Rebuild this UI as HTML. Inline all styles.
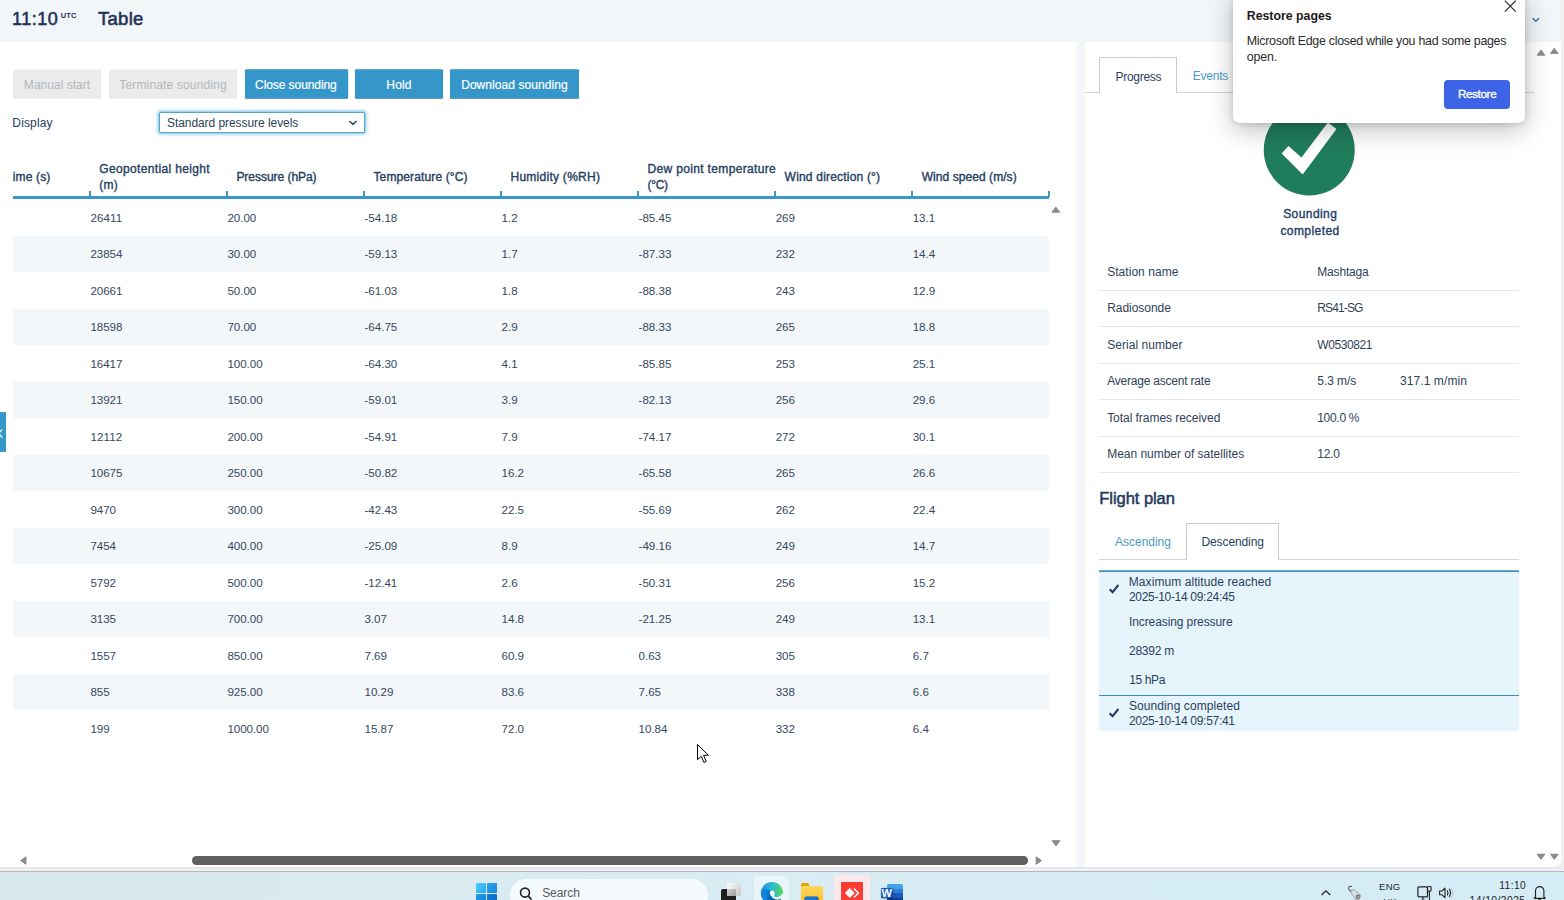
<!DOCTYPE html>
<html lang="en"><head><meta charset="utf-8"><title>Table</title><style>html,body{margin:0;padding:0}body{width:1564px;height:900px;position:relative;overflow:hidden;background:#fff;font-family:"Liberation Sans", sans-serif}
#r>div,#r>span,#r>svg{position:absolute;display:block}#r>span{white-space:pre}#r{position:absolute;left:0;top:0;width:1564px;height:900px;overflow:hidden}</style></head><body><div id="r">
<div style="left:0px;top:0px;width:1564px;height:42px;background:#f2f6f9;"></div>
<div style="left:1078px;top:42px;width:7px;height:829px;background:#f2f6f9;"></div>
<div style="left:1075px;top:42px;width:3px;height:826px;background:linear-gradient(90deg,#ffffff,#f4f5f6);"></div>
<div style="left:0px;top:867px;width:1564px;height:2.4px;background:#e7e7e7;"></div>
<div style="left:0px;top:869.4px;width:1564px;height:1.6px;background:#f1f1f1;"></div>
<div style="left:1561px;top:0px;width:3px;height:871px;background:#f1f1f1;"></div>
<div style="left:1555px;top:861px;width:6px;height:6px;background:radial-gradient(circle at 0 0,#ffffff 5.2px,#ececec 6px);"></div>
<span style="left:11.94px;top:9.66px;font-size:18px;line-height:18px;font-weight:400;color:#1f3358;letter-spacing:0.52px;-webkit-text-stroke:0.56px #1f3358;">11:10</span>
<span style="left:60.67px;top:11.77px;font-size:7.6px;line-height:7.6px;font-weight:700;color:#1f3358;letter-spacing:0.085px;">UTC</span>
<span style="left:97.91px;top:9.74px;font-size:18.5px;line-height:18.5px;font-weight:400;color:#1f3358;letter-spacing:0.311px;-webkit-text-stroke:0.57px #1f3358;">Table</span>
<svg style="left:1530px;top:15px" width="12" height="10" viewBox="0 0 12 10"><path d="M2.6 3.2 L5.8 6.2 L9 3.2" fill="none" stroke="#3a6ea5" stroke-width="1.4"/></svg>
<svg style="left:12.0px;top:68px" width="90.0" height="33" viewBox="0 0 90.0 33"><rect x="1" y="1.5" width="88.0" height="29.3" rx="1" fill="#ebebeb"/></svg>
<span style="left:23.86px;top:78.54px;font-size:12px;line-height:12px;font-weight:400;color:#b3b8bd;letter-spacing:0.021px;">Manual start</span>
<svg style="left:108.0px;top:68px" width="130.2" height="33" viewBox="0 0 130.2 33"><rect x="1" y="1.5" width="128.2" height="29.3" rx="1" fill="#ebebeb"/></svg>
<span style="left:119.36px;top:78.54px;font-size:12px;line-height:12px;font-weight:400;color:#b3b8bd;letter-spacing:0.147px;">Terminate sounding</span>
<svg style="left:243.7px;top:68px" width="105.1" height="33" viewBox="0 0 105.1 33"><rect x="1" y="1.5" width="103.1" height="29.3" rx="1" fill="#2b7aa9"/><rect x="1" y="1.5" width="103.1" height="28.4" rx="1" fill="#3496c9"/></svg>
<span style="left:255.06px;top:78.54px;font-size:12px;line-height:12px;font-weight:400;color:#ffffff;letter-spacing:-0.075px;-webkit-text-stroke:0.18px #fff;">Close sounding</span>
<svg style="left:354.0px;top:68px" width="89.9" height="33" viewBox="0 0 89.9 33"><rect x="1" y="1.5" width="87.9" height="29.3" rx="1" fill="#2b7aa9"/><rect x="1" y="1.5" width="87.9" height="28.4" rx="1" fill="#3496c9"/></svg>
<span style="left:386.36px;top:78.54px;font-size:12px;line-height:12px;font-weight:400;color:#ffffff;letter-spacing:0.123px;-webkit-text-stroke:0.18px #fff;">Hold</span>
<svg style="left:449.0px;top:68px" width="131.0" height="33" viewBox="0 0 131.0 33"><rect x="1" y="1.5" width="129.0" height="29.3" rx="1" fill="#2b7aa9"/><rect x="1" y="1.5" width="129.0" height="28.4" rx="1" fill="#3496c9"/></svg>
<span style="left:461.16px;top:78.54px;font-size:12px;line-height:12px;font-weight:400;color:#ffffff;letter-spacing:0.062px;-webkit-text-stroke:0.18px #fff;">Download sounding</span>
<span style="left:12.36px;top:117.04px;font-size:12px;line-height:12px;font-weight:400;color:#26405f;letter-spacing:0.132px;">Display</span>
<div style="left:159.3px;top:111.7px;width:205.3px;height:21.4px;background:#ffffff;box-sizing:border-box;border:1px solid #5aa5c6;border-radius:2px;box-shadow:0 0 3.5px 0.5px rgba(80,175,220,.85)"></div>
<span style="left:166.96px;top:117.04px;font-size:12px;line-height:12px;font-weight:400;color:#2f4257;letter-spacing:-0.061px;">Standard pressure levels</span>
<svg style="left:347px;top:118px" width="12" height="10" viewBox="0 0 12 10"><path d="M2.4 3 L6 6.4 L9.6 3" fill="none" stroke="#33475d" stroke-width="1.5"/></svg>
<div style="left:13px;top:196.2px;width:1036px;height:3px;background:#3a97c8;"></div>
<div style="left:88.9px;top:190.8px;width:1.7px;height:6px;background:#3a97c8;"></div>
<div style="left:225.95000000000002px;top:190.8px;width:1.7px;height:6px;background:#3a97c8;"></div>
<div style="left:363.0px;top:190.8px;width:1.7px;height:6px;background:#3a97c8;"></div>
<div style="left:500.05px;top:190.8px;width:1.7px;height:6px;background:#3a97c8;"></div>
<div style="left:637.1px;top:190.8px;width:1.7px;height:6px;background:#3a97c8;"></div>
<div style="left:774.15px;top:190.8px;width:1.7px;height:6px;background:#3a97c8;"></div>
<div style="left:911.2px;top:190.8px;width:1.7px;height:6px;background:#3a97c8;"></div>
<div style="left:1048.2500000000002px;top:190.8px;width:1.7px;height:6px;background:#3a97c8;"></div>
<span style="left:12.66px;top:170.94px;font-size:12px;line-height:12px;font-weight:400;color:#26405f;letter-spacing:0.173px;-webkit-text-stroke:0.37px #26405f;">ime (s)</span>
<span style="left:99.36px;top:162.64px;font-size:12px;line-height:12px;font-weight:400;color:#26405f;letter-spacing:0.341px;-webkit-text-stroke:0.37px #26405f;">Geopotential height</span>
<span style="left:99.36px;top:178.74px;font-size:12px;line-height:12px;font-weight:400;color:#26405f;letter-spacing:0.26px;-webkit-text-stroke:0.37px #26405f;">(m)</span>
<span style="left:236.41px;top:170.94px;font-size:12px;line-height:12px;font-weight:400;color:#26405f;letter-spacing:-0.037px;-webkit-text-stroke:0.37px #26405f;">Pressure (hPa)</span>
<span style="left:373.46px;top:170.94px;font-size:12px;line-height:12px;font-weight:400;color:#26405f;letter-spacing:0.126px;-webkit-text-stroke:0.37px #26405f;">Temperature (°C)</span>
<span style="left:510.51px;top:170.94px;font-size:12px;line-height:12px;font-weight:400;color:#26405f;letter-spacing:0.262px;-webkit-text-stroke:0.37px #26405f;">Humidity (%RH)</span>
<span style="left:647.56px;top:162.64px;font-size:12px;line-height:12px;font-weight:400;color:#26405f;letter-spacing:0.337px;-webkit-text-stroke:0.37px #26405f;">Dew point temperature</span>
<span style="left:647.56px;top:178.74px;font-size:12px;line-height:12px;font-weight:400;color:#26405f;letter-spacing:-0.297px;-webkit-text-stroke:0.37px #26405f;">(°C)</span>
<span style="left:784.61px;top:170.94px;font-size:12px;line-height:12px;font-weight:400;color:#26405f;letter-spacing:0.196px;-webkit-text-stroke:0.37px #26405f;">Wind direction (°)</span>
<span style="left:921.66px;top:170.94px;font-size:12px;line-height:12px;font-weight:400;color:#26405f;letter-spacing:0.066px;-webkit-text-stroke:0.37px #26405f;">Wind speed (m/s)</span>
<span style="left:90.39px;top:211.98px;font-size:11.6px;line-height:11.6px;font-weight:400;color:#35495f;letter-spacing:0.113px;">26411</span>
<span style="left:227.44px;top:211.98px;font-size:11.6px;line-height:11.6px;font-weight:400;color:#35495f;letter-spacing:-0.042px;">20.00</span>
<span style="left:364.49px;top:211.98px;font-size:11.6px;line-height:11.6px;font-weight:400;color:#35495f;letter-spacing:-0.02px;">-54.18</span>
<span style="left:501.54px;top:211.98px;font-size:11.6px;line-height:11.6px;font-weight:400;color:#35495f;letter-spacing:0.01px;">1.2</span>
<span style="left:638.59px;top:211.98px;font-size:11.6px;line-height:11.6px;font-weight:400;color:#35495f;letter-spacing:-0.02px;">-85.45</span>
<span style="left:775.64px;top:211.98px;font-size:11.6px;line-height:11.6px;font-weight:400;color:#35495f;letter-spacing:-0.012px;">269</span>
<span style="left:912.69px;top:211.98px;font-size:11.6px;line-height:11.6px;font-weight:400;color:#35495f;letter-spacing:-0.026px;">13.1</span>
<div style="left:13px;top:235.5px;width:1036px;height:36.5px;background:#f3f7fa;"></div>
<span style="left:90.39px;top:248.48px;font-size:11.6px;line-height:11.6px;font-weight:400;color:#35495f;letter-spacing:-0.058px;">23854</span>
<span style="left:227.44px;top:248.48px;font-size:11.6px;line-height:11.6px;font-weight:400;color:#35495f;letter-spacing:-0.042px;">30.00</span>
<span style="left:364.49px;top:248.48px;font-size:11.6px;line-height:11.6px;font-weight:400;color:#35495f;letter-spacing:-0.02px;">-59.13</span>
<span style="left:501.54px;top:248.48px;font-size:11.6px;line-height:11.6px;font-weight:400;color:#35495f;letter-spacing:0.01px;">1.7</span>
<span style="left:638.59px;top:248.48px;font-size:11.6px;line-height:11.6px;font-weight:400;color:#35495f;letter-spacing:-0.02px;">-87.33</span>
<span style="left:775.64px;top:248.48px;font-size:11.6px;line-height:11.6px;font-weight:400;color:#35495f;letter-spacing:-0.012px;">232</span>
<span style="left:912.69px;top:248.48px;font-size:11.6px;line-height:11.6px;font-weight:400;color:#35495f;letter-spacing:-0.026px;">14.4</span>
<span style="left:90.39px;top:284.98px;font-size:11.6px;line-height:11.6px;font-weight:400;color:#35495f;letter-spacing:-0.058px;">20661</span>
<span style="left:227.44px;top:284.98px;font-size:11.6px;line-height:11.6px;font-weight:400;color:#35495f;letter-spacing:-0.042px;">50.00</span>
<span style="left:364.49px;top:284.98px;font-size:11.6px;line-height:11.6px;font-weight:400;color:#35495f;letter-spacing:-0.02px;">-61.03</span>
<span style="left:501.54px;top:284.98px;font-size:11.6px;line-height:11.6px;font-weight:400;color:#35495f;letter-spacing:0.01px;">1.8</span>
<span style="left:638.59px;top:284.98px;font-size:11.6px;line-height:11.6px;font-weight:400;color:#35495f;letter-spacing:-0.02px;">-88.38</span>
<span style="left:775.64px;top:284.98px;font-size:11.6px;line-height:11.6px;font-weight:400;color:#35495f;letter-spacing:-0.012px;">243</span>
<span style="left:912.69px;top:284.98px;font-size:11.6px;line-height:11.6px;font-weight:400;color:#35495f;letter-spacing:-0.026px;">12.9</span>
<div style="left:13px;top:308.5px;width:1036px;height:36.5px;background:#f3f7fa;"></div>
<span style="left:90.39px;top:321.48px;font-size:11.6px;line-height:11.6px;font-weight:400;color:#35495f;letter-spacing:-0.058px;">18598</span>
<span style="left:227.44px;top:321.48px;font-size:11.6px;line-height:11.6px;font-weight:400;color:#35495f;letter-spacing:-0.042px;">70.00</span>
<span style="left:364.49px;top:321.48px;font-size:11.6px;line-height:11.6px;font-weight:400;color:#35495f;letter-spacing:-0.02px;">-64.75</span>
<span style="left:501.54px;top:321.48px;font-size:11.6px;line-height:11.6px;font-weight:400;color:#35495f;letter-spacing:0.01px;">2.9</span>
<span style="left:638.59px;top:321.48px;font-size:11.6px;line-height:11.6px;font-weight:400;color:#35495f;letter-spacing:-0.02px;">-88.33</span>
<span style="left:775.64px;top:321.48px;font-size:11.6px;line-height:11.6px;font-weight:400;color:#35495f;letter-spacing:-0.012px;">265</span>
<span style="left:912.69px;top:321.48px;font-size:11.6px;line-height:11.6px;font-weight:400;color:#35495f;letter-spacing:-0.026px;">18.8</span>
<span style="left:90.39px;top:357.98px;font-size:11.6px;line-height:11.6px;font-weight:400;color:#35495f;letter-spacing:-0.058px;">16417</span>
<span style="left:227.44px;top:357.98px;font-size:11.6px;line-height:11.6px;font-weight:400;color:#35495f;letter-spacing:-0.057px;">100.00</span>
<span style="left:364.49px;top:357.98px;font-size:11.6px;line-height:11.6px;font-weight:400;color:#35495f;letter-spacing:-0.02px;">-64.30</span>
<span style="left:501.54px;top:357.98px;font-size:11.6px;line-height:11.6px;font-weight:400;color:#35495f;letter-spacing:0.01px;">4.1</span>
<span style="left:638.59px;top:357.98px;font-size:11.6px;line-height:11.6px;font-weight:400;color:#35495f;letter-spacing:-0.02px;">-85.85</span>
<span style="left:775.64px;top:357.98px;font-size:11.6px;line-height:11.6px;font-weight:400;color:#35495f;letter-spacing:-0.012px;">253</span>
<span style="left:912.69px;top:357.98px;font-size:11.6px;line-height:11.6px;font-weight:400;color:#35495f;letter-spacing:-0.026px;">25.1</span>
<div style="left:13px;top:381.5px;width:1036px;height:36.5px;background:#f3f7fa;"></div>
<span style="left:90.39px;top:394.48px;font-size:11.6px;line-height:11.6px;font-weight:400;color:#35495f;letter-spacing:-0.058px;">13921</span>
<span style="left:227.44px;top:394.48px;font-size:11.6px;line-height:11.6px;font-weight:400;color:#35495f;letter-spacing:-0.057px;">150.00</span>
<span style="left:364.49px;top:394.48px;font-size:11.6px;line-height:11.6px;font-weight:400;color:#35495f;letter-spacing:-0.02px;">-59.01</span>
<span style="left:501.54px;top:394.48px;font-size:11.6px;line-height:11.6px;font-weight:400;color:#35495f;letter-spacing:0.01px;">3.9</span>
<span style="left:638.59px;top:394.48px;font-size:11.6px;line-height:11.6px;font-weight:400;color:#35495f;letter-spacing:-0.02px;">-82.13</span>
<span style="left:775.64px;top:394.48px;font-size:11.6px;line-height:11.6px;font-weight:400;color:#35495f;letter-spacing:-0.012px;">256</span>
<span style="left:912.69px;top:394.48px;font-size:11.6px;line-height:11.6px;font-weight:400;color:#35495f;letter-spacing:-0.026px;">29.6</span>
<span style="left:90.39px;top:430.98px;font-size:11.6px;line-height:11.6px;font-weight:400;color:#35495f;letter-spacing:0.113px;">12112</span>
<span style="left:227.44px;top:430.98px;font-size:11.6px;line-height:11.6px;font-weight:400;color:#35495f;letter-spacing:-0.057px;">200.00</span>
<span style="left:364.49px;top:430.98px;font-size:11.6px;line-height:11.6px;font-weight:400;color:#35495f;letter-spacing:-0.02px;">-54.91</span>
<span style="left:501.54px;top:430.98px;font-size:11.6px;line-height:11.6px;font-weight:400;color:#35495f;letter-spacing:0.01px;">7.9</span>
<span style="left:638.59px;top:430.98px;font-size:11.6px;line-height:11.6px;font-weight:400;color:#35495f;letter-spacing:-0.02px;">-74.17</span>
<span style="left:775.64px;top:430.98px;font-size:11.6px;line-height:11.6px;font-weight:400;color:#35495f;letter-spacing:-0.012px;">272</span>
<span style="left:912.69px;top:430.98px;font-size:11.6px;line-height:11.6px;font-weight:400;color:#35495f;letter-spacing:-0.026px;">30.1</span>
<div style="left:13px;top:454.5px;width:1036px;height:36.5px;background:#f3f7fa;"></div>
<span style="left:90.39px;top:467.48px;font-size:11.6px;line-height:11.6px;font-weight:400;color:#35495f;letter-spacing:-0.058px;">10675</span>
<span style="left:227.44px;top:467.48px;font-size:11.6px;line-height:11.6px;font-weight:400;color:#35495f;letter-spacing:-0.057px;">250.00</span>
<span style="left:364.49px;top:467.48px;font-size:11.6px;line-height:11.6px;font-weight:400;color:#35495f;letter-spacing:-0.02px;">-50.82</span>
<span style="left:501.54px;top:467.48px;font-size:11.6px;line-height:11.6px;font-weight:400;color:#35495f;letter-spacing:-0.026px;">16.2</span>
<span style="left:638.59px;top:467.48px;font-size:11.6px;line-height:11.6px;font-weight:400;color:#35495f;letter-spacing:-0.02px;">-65.58</span>
<span style="left:775.64px;top:467.48px;font-size:11.6px;line-height:11.6px;font-weight:400;color:#35495f;letter-spacing:-0.012px;">265</span>
<span style="left:912.69px;top:467.48px;font-size:11.6px;line-height:11.6px;font-weight:400;color:#35495f;letter-spacing:-0.026px;">26.6</span>
<span style="left:90.39px;top:503.98px;font-size:11.6px;line-height:11.6px;font-weight:400;color:#35495f;letter-spacing:-0.039px;">9470</span>
<span style="left:227.44px;top:503.98px;font-size:11.6px;line-height:11.6px;font-weight:400;color:#35495f;letter-spacing:-0.057px;">300.00</span>
<span style="left:364.49px;top:503.98px;font-size:11.6px;line-height:11.6px;font-weight:400;color:#35495f;letter-spacing:-0.02px;">-42.43</span>
<span style="left:501.54px;top:503.98px;font-size:11.6px;line-height:11.6px;font-weight:400;color:#35495f;letter-spacing:-0.026px;">22.5</span>
<span style="left:638.59px;top:503.98px;font-size:11.6px;line-height:11.6px;font-weight:400;color:#35495f;letter-spacing:-0.02px;">-55.69</span>
<span style="left:775.64px;top:503.98px;font-size:11.6px;line-height:11.6px;font-weight:400;color:#35495f;letter-spacing:-0.012px;">262</span>
<span style="left:912.69px;top:503.98px;font-size:11.6px;line-height:11.6px;font-weight:400;color:#35495f;letter-spacing:-0.026px;">22.4</span>
<div style="left:13px;top:527.5px;width:1036px;height:36.5px;background:#f3f7fa;"></div>
<span style="left:90.39px;top:540.48px;font-size:11.6px;line-height:11.6px;font-weight:400;color:#35495f;letter-spacing:-0.039px;">7454</span>
<span style="left:227.44px;top:540.48px;font-size:11.6px;line-height:11.6px;font-weight:400;color:#35495f;letter-spacing:-0.057px;">400.00</span>
<span style="left:364.49px;top:540.48px;font-size:11.6px;line-height:11.6px;font-weight:400;color:#35495f;letter-spacing:-0.02px;">-25.09</span>
<span style="left:501.54px;top:540.48px;font-size:11.6px;line-height:11.6px;font-weight:400;color:#35495f;letter-spacing:0.01px;">8.9</span>
<span style="left:638.59px;top:540.48px;font-size:11.6px;line-height:11.6px;font-weight:400;color:#35495f;letter-spacing:-0.02px;">-49.16</span>
<span style="left:775.64px;top:540.48px;font-size:11.6px;line-height:11.6px;font-weight:400;color:#35495f;letter-spacing:-0.012px;">249</span>
<span style="left:912.69px;top:540.48px;font-size:11.6px;line-height:11.6px;font-weight:400;color:#35495f;letter-spacing:-0.026px;">14.7</span>
<span style="left:90.39px;top:576.98px;font-size:11.6px;line-height:11.6px;font-weight:400;color:#35495f;letter-spacing:-0.039px;">5792</span>
<span style="left:227.44px;top:576.98px;font-size:11.6px;line-height:11.6px;font-weight:400;color:#35495f;letter-spacing:-0.057px;">500.00</span>
<span style="left:364.49px;top:576.98px;font-size:11.6px;line-height:11.6px;font-weight:400;color:#35495f;letter-spacing:-0.02px;">-12.41</span>
<span style="left:501.54px;top:576.98px;font-size:11.6px;line-height:11.6px;font-weight:400;color:#35495f;letter-spacing:0.01px;">2.6</span>
<span style="left:638.59px;top:576.98px;font-size:11.6px;line-height:11.6px;font-weight:400;color:#35495f;letter-spacing:-0.02px;">-50.31</span>
<span style="left:775.64px;top:576.98px;font-size:11.6px;line-height:11.6px;font-weight:400;color:#35495f;letter-spacing:-0.012px;">256</span>
<span style="left:912.69px;top:576.98px;font-size:11.6px;line-height:11.6px;font-weight:400;color:#35495f;letter-spacing:-0.026px;">15.2</span>
<div style="left:13px;top:600.5px;width:1036px;height:36.5px;background:#f3f7fa;"></div>
<span style="left:90.39px;top:613.48px;font-size:11.6px;line-height:11.6px;font-weight:400;color:#35495f;letter-spacing:-0.039px;">3135</span>
<span style="left:227.44px;top:613.48px;font-size:11.6px;line-height:11.6px;font-weight:400;color:#35495f;letter-spacing:-0.057px;">700.00</span>
<span style="left:364.49px;top:613.48px;font-size:11.6px;line-height:11.6px;font-weight:400;color:#35495f;letter-spacing:-0.026px;">3.07</span>
<span style="left:501.54px;top:613.48px;font-size:11.6px;line-height:11.6px;font-weight:400;color:#35495f;letter-spacing:-0.026px;">14.8</span>
<span style="left:638.59px;top:613.48px;font-size:11.6px;line-height:11.6px;font-weight:400;color:#35495f;letter-spacing:-0.02px;">-21.25</span>
<span style="left:775.64px;top:613.48px;font-size:11.6px;line-height:11.6px;font-weight:400;color:#35495f;letter-spacing:-0.012px;">249</span>
<span style="left:912.69px;top:613.48px;font-size:11.6px;line-height:11.6px;font-weight:400;color:#35495f;letter-spacing:-0.026px;">13.1</span>
<span style="left:90.39px;top:649.98px;font-size:11.6px;line-height:11.6px;font-weight:400;color:#35495f;letter-spacing:-0.039px;">1557</span>
<span style="left:227.44px;top:649.98px;font-size:11.6px;line-height:11.6px;font-weight:400;color:#35495f;letter-spacing:-0.057px;">850.00</span>
<span style="left:364.49px;top:649.98px;font-size:11.6px;line-height:11.6px;font-weight:400;color:#35495f;letter-spacing:-0.026px;">7.69</span>
<span style="left:501.54px;top:649.98px;font-size:11.6px;line-height:11.6px;font-weight:400;color:#35495f;letter-spacing:-0.026px;">60.9</span>
<span style="left:638.59px;top:649.98px;font-size:11.6px;line-height:11.6px;font-weight:400;color:#35495f;letter-spacing:-0.026px;">0.63</span>
<span style="left:775.64px;top:649.98px;font-size:11.6px;line-height:11.6px;font-weight:400;color:#35495f;letter-spacing:-0.012px;">305</span>
<span style="left:912.69px;top:649.98px;font-size:11.6px;line-height:11.6px;font-weight:400;color:#35495f;letter-spacing:0.01px;">6.7</span>
<div style="left:13px;top:673.5px;width:1036px;height:36.5px;background:#f3f7fa;"></div>
<span style="left:90.39px;top:686.48px;font-size:11.6px;line-height:11.6px;font-weight:400;color:#35495f;letter-spacing:-0.012px;">855</span>
<span style="left:227.44px;top:686.48px;font-size:11.6px;line-height:11.6px;font-weight:400;color:#35495f;letter-spacing:-0.057px;">925.00</span>
<span style="left:364.49px;top:686.48px;font-size:11.6px;line-height:11.6px;font-weight:400;color:#35495f;letter-spacing:-0.042px;">10.29</span>
<span style="left:501.54px;top:686.48px;font-size:11.6px;line-height:11.6px;font-weight:400;color:#35495f;letter-spacing:-0.026px;">83.6</span>
<span style="left:638.59px;top:686.48px;font-size:11.6px;line-height:11.6px;font-weight:400;color:#35495f;letter-spacing:-0.026px;">7.65</span>
<span style="left:775.64px;top:686.48px;font-size:11.6px;line-height:11.6px;font-weight:400;color:#35495f;letter-spacing:-0.012px;">338</span>
<span style="left:912.69px;top:686.48px;font-size:11.6px;line-height:11.6px;font-weight:400;color:#35495f;letter-spacing:0.01px;">6.6</span>
<span style="left:90.39px;top:722.98px;font-size:11.6px;line-height:11.6px;font-weight:400;color:#35495f;letter-spacing:-0.012px;">199</span>
<span style="left:227.44px;top:722.98px;font-size:11.6px;line-height:11.6px;font-weight:400;color:#35495f;letter-spacing:-0.066px;">1000.00</span>
<span style="left:364.49px;top:722.98px;font-size:11.6px;line-height:11.6px;font-weight:400;color:#35495f;letter-spacing:-0.042px;">15.87</span>
<span style="left:501.54px;top:722.98px;font-size:11.6px;line-height:11.6px;font-weight:400;color:#35495f;letter-spacing:-0.026px;">72.0</span>
<span style="left:638.59px;top:722.98px;font-size:11.6px;line-height:11.6px;font-weight:400;color:#35495f;letter-spacing:-0.042px;">10.84</span>
<span style="left:775.64px;top:722.98px;font-size:11.6px;line-height:11.6px;font-weight:400;color:#35495f;letter-spacing:-0.012px;">332</span>
<span style="left:912.69px;top:722.98px;font-size:11.6px;line-height:11.6px;font-weight:400;color:#35495f;letter-spacing:0.01px;">6.4</span>
<svg style="left:0;top:0" width="1564" height="900" viewBox="0 0 1564 900"><polygon points="1052.0,212.2 1059.6,212.2 1055.8,207.0" fill="#8a8a8a" stroke="#8a8a8a" stroke-width="1" stroke-linejoin="round"/><polygon points="1052.2,840.6999999999999 1059.8,840.6999999999999 1056,845.9" fill="#8a8a8a" stroke="#8a8a8a" stroke-width="1" stroke-linejoin="round"/><polygon points="26.0,856.8000000000001 26.0,864.4 20.799999999999997,860.6" fill="#8a8a8a" stroke="#8a8a8a" stroke-width="1" stroke-linejoin="round"/><polygon points="1036.2,856.8000000000001 1036.2,864.4 1041.3999999999999,860.6" fill="#8a8a8a" stroke="#8a8a8a" stroke-width="1" stroke-linejoin="round"/><polygon points="1537.2,55.2 1544.8,55.2 1541,50.0" fill="#8a8a8a" stroke="#8a8a8a" stroke-width="1" stroke-linejoin="round"/><polygon points="1550.5,53.4 1558.1,53.4 1554.3,48.199999999999996" fill="#8a8a8a" stroke="#8a8a8a" stroke-width="1" stroke-linejoin="round"/><polygon points="1537.2,854.1999999999999 1544.8,854.1999999999999 1541,859.4" fill="#8a8a8a" stroke="#8a8a8a" stroke-width="1" stroke-linejoin="round"/><polygon points="1550.5,854.1999999999999 1558.1,854.1999999999999 1554.3,859.4" fill="#8a8a8a" stroke="#8a8a8a" stroke-width="1" stroke-linejoin="round"/></svg>
<div style="left:191.8px;top:856.2px;width:836.4px;height:8.6px;background:#606060;border-radius:4.3px"></div>
<div style="left:0px;top:412px;width:5.8px;height:40px;background:#3598c8;"></div>
<svg style="left:0;top:424px" width="6" height="16" viewBox="0 0 6 16"><path d="M2.2 5.3 L-1.3 9.4 L2.2 13.5" fill="none" stroke="#fff" stroke-width="1.3"/></svg>
<div style="left:1085px;top:92px;width:449px;height:1px;background:#d3d6da;"></div>
<div style="left:1099px;top:57px;width:78px;height:36px;background:#ffffff;box-sizing:border-box;border:1px solid #c9cbce;border-bottom:none"></div>
<span style="left:1115.46px;top:70.64px;font-size:12px;line-height:12px;font-weight:400;color:#2c4360;letter-spacing:-0.269px;">Progress</span>
<span style="left:1192.66px;top:70.34px;font-size:12px;line-height:12px;font-weight:400;color:#4b9bc8;letter-spacing:-0.201px;">Events</span>
<svg style="left:1260px;top:100px" width="100" height="100" viewBox="1260 100 100 100"><circle cx="1309.25" cy="150" r="45.5" fill="#207d5b"/><polygon points="1281.66,153.5 1288.4,145.9 1301.5,157.4 1327.86,122.5 1336.5,129 1302.66,174.5" fill="#fff"/></svg>
<span style="left:1283.13px;top:208.44px;font-size:12px;line-height:12px;font-weight:400;color:#243d66;letter-spacing:0.433px;-webkit-text-stroke:0.37px #243d66;">Sounding</span>
<span style="left:1280.42px;top:224.84px;font-size:12px;line-height:12px;font-weight:400;color:#243d66;letter-spacing:0.423px;-webkit-text-stroke:0.37px #243d66;">completed</span>
<span style="left:1107.16px;top:265.74px;font-size:12px;line-height:12px;font-weight:400;color:#2f4258;letter-spacing:0.043px;">Station name</span>
<span style="left:1317.26px;top:265.74px;font-size:12px;line-height:12px;font-weight:400;color:#2f4258;letter-spacing:-0.165px;">Mashtaga</span>
<div style="left:1099px;top:289.5px;width:420px;height:1px;background:#e6e8ea;"></div>
<span style="left:1107.16px;top:302.24px;font-size:12px;line-height:12px;font-weight:400;color:#2f4258;letter-spacing:-0.043px;">Radiosonde</span>
<span style="left:1317.26px;top:302.24px;font-size:12px;line-height:12px;font-weight:400;color:#2f4258;letter-spacing:-0.869px;">RS41-SG</span>
<div style="left:1099px;top:326.0px;width:420px;height:1px;background:#e6e8ea;"></div>
<span style="left:1107.16px;top:338.74px;font-size:12px;line-height:12px;font-weight:400;color:#2f4258;letter-spacing:0.058px;">Serial number</span>
<span style="left:1317.26px;top:338.74px;font-size:12px;line-height:12px;font-weight:400;color:#2f4258;letter-spacing:-0.422px;">W0530821</span>
<div style="left:1099px;top:362.5px;width:420px;height:1px;background:#e6e8ea;"></div>
<span style="left:1107.16px;top:375.24px;font-size:12px;line-height:12px;font-weight:400;color:#2f4258;letter-spacing:-0.208px;">Average ascent rate</span>
<span style="left:1317.26px;top:375.24px;font-size:12px;line-height:12px;font-weight:400;color:#2f4258;letter-spacing:-0.038px;">5.3 m/s</span>
<span style="left:1399.96px;top:375.24px;font-size:12px;line-height:12px;font-weight:400;color:#2f4258;letter-spacing:0.093px;">317.1 m/min</span>
<div style="left:1099px;top:399.0px;width:420px;height:1px;background:#e6e8ea;"></div>
<span style="left:1107.16px;top:411.74px;font-size:12px;line-height:12px;font-weight:400;color:#2f4258;letter-spacing:-0.044px;">Total frames received</span>
<span style="left:1317.26px;top:411.74px;font-size:12px;line-height:12px;font-weight:400;color:#2f4258;letter-spacing:-0.307px;">100.0 %</span>
<div style="left:1099px;top:435.5px;width:420px;height:1px;background:#e6e8ea;"></div>
<span style="left:1107.16px;top:448.24px;font-size:12px;line-height:12px;font-weight:400;color:#2f4258;letter-spacing:-0.017px;">Mean number of satellites</span>
<span style="left:1317.26px;top:448.24px;font-size:12px;line-height:12px;font-weight:400;color:#2f4258;letter-spacing:-0.207px;">12.0</span>
<div style="left:1099px;top:472.0px;width:420px;height:1px;background:#e6e8ea;"></div>
<span style="left:1099.35px;top:490.43px;font-size:16.5px;line-height:16.5px;font-weight:400;color:#1f3a5f;letter-spacing:-0.057px;-webkit-text-stroke:0.51px #1f3a5f;">Flight plan</span>
<div style="left:1099px;top:559px;width:420px;height:1px;background:#d3d6da;"></div>
<div style="left:1186.3px;top:523px;width:92.4px;height:37px;background:#ffffff;box-sizing:border-box;border:1px solid #c9cbce;border-bottom:none"></div>
<span style="left:1115.06px;top:536.34px;font-size:12px;line-height:12px;font-weight:400;color:#4b9bc8;letter-spacing:-0.019px;">Ascending</span>
<span style="left:1201.46px;top:536.34px;font-size:12px;line-height:12px;font-weight:400;color:#2c4360;letter-spacing:-0.099px;">Descending</span>
<div style="left:1099px;top:571px;width:420px;height:160px;background:#e6f4fb;"></div>
<div style="left:1099px;top:570.2px;width:420px;height:1.8px;background:linear-gradient(180deg,#8fc3da,#3d8fb3 60%);"></div>
<div style="left:1099px;top:694.6px;width:420px;height:1.2px;background:#3d8fb3;"></div>
<span style="left:1128.76px;top:576.24px;font-size:12px;line-height:12px;font-weight:400;color:#2a415e;letter-spacing:0.078px;">Maximum altitude reached</span>
<span style="left:1128.96px;top:591.04px;font-size:12px;line-height:12px;font-weight:400;color:#2a415e;letter-spacing:-0.3px;">2025-10-14 09:24:45</span>
<span style="left:1128.96px;top:616.44px;font-size:12px;line-height:12px;font-weight:400;color:#2a415e;letter-spacing:-0.095px;">Increasing pressure</span>
<span style="left:1128.96px;top:645.44px;font-size:12px;line-height:12px;font-weight:400;color:#2a415e;letter-spacing:-0.228px;">28392 m</span>
<span style="left:1129.36px;top:674.44px;font-size:12px;line-height:12px;font-weight:400;color:#2a415e;letter-spacing:-0.411px;">15 hPa</span>
<span style="left:1128.96px;top:700.04px;font-size:12px;line-height:12px;font-weight:400;color:#2a415e;letter-spacing:0.091px;">Sounding completed</span>
<span style="left:1128.96px;top:714.64px;font-size:12px;line-height:12px;font-weight:400;color:#2a415e;letter-spacing:-0.3px;">2025-10-14 09:57:41</span>
<svg style="left:1107.2px;top:582.4px" width="14" height="14" viewBox="-7 -7 14 14"><path d="M-4.3 0.2 L-1.4 3.2 L4.4 -4" fill="none" stroke="#1f3a5f" stroke-width="2"/></svg>
<svg style="left:1107.2px;top:706.2px" width="14" height="14" viewBox="-7 -7 14 14"><path d="M-4.3 0.2 L-1.4 3.2 L4.4 -4" fill="none" stroke="#1f3a5f" stroke-width="2"/></svg>
<svg style="left:695px;top:742px" width="18" height="24" viewBox="0 0 18 24"><path d="M2.5 2.5 L2.5 17.6 L6.2 14.3 L8.9 20.4 L11.2 19.4 L8.6 13.4 L13.4 13.2 Z" fill="#fff" stroke="#000" stroke-width="1" stroke-linejoin="round"/></svg>
<div style="left:1233px;top:-8px;width:292px;height:131.3px;background:#fff;border-radius:7px;box-shadow:0 7px 26px rgba(0,0,0,.25),0 1px 6px rgba(0,0,0,.14)"></div>
<span style="left:1246.74px;top:10.19px;font-size:12.3px;line-height:12.3px;font-weight:700;color:#1b1b1b;letter-spacing:0.013px;">Restore pages</span>
<span style="left:1246.83px;top:35.30px;font-size:12.4px;line-height:12.4px;font-weight:400;color:#2b2b2b;letter-spacing:-0.277px;">Microsoft Edge closed while you had some pages</span>
<span style="left:1246.83px;top:51.40px;font-size:12.4px;line-height:12.4px;font-weight:400;color:#2b2b2b;letter-spacing:-0.136px;">open.</span>
<div style="left:1443.5px;top:79.5px;width:66.5px;height:29px;background:#3d63e7;border-radius:4px"></div>
<span style="left:1457.88px;top:88.10px;font-size:11.7px;line-height:11.7px;font-weight:400;color:#ffffff;letter-spacing:-0.357px;-webkit-text-stroke:0.36px #ffffff;">Restore</span>
<svg style="left:1503px;top:-1px" width="15" height="15" viewBox="0 0 15 15"><path d="M1.8 1.6 L12.8 12.6 M12.8 1.6 L1.8 12.6" stroke="#222" stroke-width="1.1" fill="none"/></svg>
<div style="left:0px;top:871px;width:1564px;height:29px;background:linear-gradient(90deg,#d8e8ef 0%,#daecf3 45%,#d3ecf5 100%);box-sizing:border-box;border-top:1px solid #adbac1"></div>
<div style="left:475.8px;top:882.9px;width:10.2px;height:10.2px;background:linear-gradient(135deg,#4fd0fb,#2ba5ec);border-radius:0.8px"></div>
<div style="left:486.7px;top:882.9px;width:10.2px;height:10.2px;background:linear-gradient(135deg,#2aa3ec,#1687dc);border-radius:0.8px"></div>
<div style="left:475.8px;top:893.8px;width:10.2px;height:10.2px;background:linear-gradient(135deg,#1f9be8,#0f7fd8);border-radius:0.8px"></div>
<div style="left:486.7px;top:893.8px;width:10.2px;height:10.2px;background:linear-gradient(135deg,#0f80d8,#0668c6);border-radius:0.8px"></div>
<div style="left:510px;top:878.7px;width:198.2px;height:32px;background:#f4fafd;border-radius:16px"></div>
<svg style="left:517px;top:884.5px" width="18" height="16" viewBox="0 0 18 16"><circle cx="8" cy="7.6" r="4.5" fill="none" stroke="#222" stroke-width="1.6"/><path d="M11.2 11 L14.6 14.6" stroke="#222" stroke-width="1.8"/></svg>
<span style="left:542.16px;top:887.44px;font-size:12px;line-height:12px;font-weight:400;color:#5a5a5a;letter-spacing:-0.059px;">Search</span>
<div style="left:726.8px;top:883.3px;width:14.6px;height:13.1px;background:linear-gradient(135deg,#ffffff,#c4c4c4);border-radius:2px"></div>
<div style="left:720.7px;top:888.7px;width:15.3px;height:14px;background:#1e1e1e;border-radius:2px"></div>
<div style="left:726.8px;top:888.7px;width:9.2px;height:7.7px;background:linear-gradient(135deg,#d4d4d4,#9c9c9c);"></div>
<div style="left:754.1px;top:875.8px;width:34.8px;height:30px;background:#e9f4fb;border-radius:4px"></div>
<svg style="left:759.6px;top:880.8px" width="24" height="24" viewBox="0 0 24 24"><defs><linearGradient id="eg" x1="0" y1="0" x2="1" y2="0"><stop offset="0" stop-color="#1a8fe3"/><stop offset="0.45" stop-color="#27b5d6"/><stop offset="0.8" stop-color="#45cf8c"/><stop offset="1" stop-color="#62dc52"/></linearGradient><linearGradient id="eg2" x1="0" y1="0" x2="1" y2="1"><stop offset="0" stop-color="#0f79d0"/><stop offset="1" stop-color="#0a4a94"/></linearGradient></defs><circle cx="12" cy="12" r="11.1" fill="url(#eg)"/><path d="M1 13.5 C1 9 3.6 6.6 7.8 8.6 C6 12 7 19 12 23.1 A11.1 11.1 0 0 1 1 13.5 Z" fill="#0f86dc"/><path d="M7.8 8.6 C9 8.2 9.9 10 9.84 11.9 C9.9 13.2 10.4 14.3 12.9 17 C14.5 18.4 18 19.2 21.1 17.8 A11.1 11.1 0 0 1 12 23.1 C8 22 5.5 16 7.8 8.6 Z" fill="url(#eg2)"/><path d="M9.84 11.9 C9.9 10.2 11.2 9.3 12.4 9.4 C13.8 9.5 14.8 10.8 14.7 12.2 C14.6 13.4 14 14.2 14.4 15.2 C15.5 16.6 18.5 16.4 20 15 C21.5 14 22.8 12.8 23.1 11.7 L24.5 12 L24.5 18.2 L21.1 17.8 C18 19.2 14.5 18.4 12.9 17 C10.4 14.3 9.9 13.2 9.84 11.9 Z" fill="#e9f4fb"/></svg>
<div style="left:801.1px;top:883.1px;width:8.4px;height:4.6px;background:#e6a100;border-radius:1.5px 1.5px 0 0"></div>
<div style="left:801.1px;top:885.7px;width:21.8px;height:16px;background:linear-gradient(180deg,#ffd85c,#fcbf2e);border-radius:1.5px"></div>
<div style="left:804.5px;top:896.6px;width:13.8px;height:5px;background:#1478d4;border-radius:1.5px 1.5px 0 0;box-shadow:0 0 0 0.6px #0c5aa8"></div>
<div style="left:840px;top:875.2px;width:30.4px;height:30px;background:#fde8ec;border-radius:4px"></div>
<div style="left:833.8px;top:875px;width:31.4px;height:30px;background:#fde9ec;border-radius:4px;box-shadow:1px 0 0 #efe2ea"></div>
<div style="left:841.2px;top:882px;width:21.7px;height:20px;background:#fa3c33;"></div>
<svg style="left:843px;top:884px" width="20" height="16" viewBox="0 0 20 16"><path d="M6.7 4.1 L11.6 9 L6.7 13.9 L1.9 9 Z" fill="#fff"/><path d="M10.9 4.5 L15.4 9 L10.9 13.5" fill="none" stroke="#fff" stroke-width="1.5"/></svg>
<div style="left:886.8px;top:883.5px;width:16.1px;height:5.6px;background:#41a5ee;border-radius:1.5px 1.5px 0 0"></div>
<div style="left:886.8px;top:888.9px;width:16.1px;height:4.3px;background:#2b7cd3;"></div>
<div style="left:886.8px;top:893.0px;width:16.1px;height:4.8px;background:#185abd;"></div>
<div style="left:886.8px;top:897.6px;width:16.1px;height:4px;background:#103f91;"></div>
<div style="left:881.2px;top:887.6px;width:11.2px;height:10.7px;background:#1a5dbe;border-radius:1.2px;box-shadow:0.5px 0.5px 1.5px rgba(0,0,0,.35)"></div>
<span style="left:881.53px;top:887.79px;font-size:11px;line-height:11px;font-weight:700;color:#ffffff;letter-spacing:-0.251px;">W</span>
<svg style="left:1317px;top:885px" width="18" height="14" viewBox="0 0 18 14"><path d="M4.6 10 L8.9 5.8 L13.2 10" fill="none" stroke="#222" stroke-width="1.3"/></svg>
<svg style="left:1344px;top:880px" width="22" height="20" viewBox="0 0 22 20"><path d="M8 6.6 C5.6 5.6 3.6 7.6 5 9.6 C5.8 10.6 6.6 11 7.2 11.4" fill="none" stroke="#555" stroke-width="1.1"/><path d="M7.2 10.6 L10.6 9.8 L16.8 15.4 L15.2 19.2 L11.6 19.6 L7.4 13.4 Z" fill="#d8dde2" stroke="#8a9096" stroke-width="0.7"/><circle cx="14" cy="16.8" r="2.2" fill="#6e6e6e"/><circle cx="14.4" cy="17" r="0.9" fill="#c8c8c8"/></svg>
<span style="left:1379.04px;top:882.16px;font-size:9.5px;line-height:9.5px;font-weight:400;color:#1f1f1f;letter-spacing:0.312px;">ENG</span>
<span style="left:1383.13px;top:897.06px;font-size:9.5px;line-height:9.5px;font-weight:400;color:#1f1f1f;letter-spacing:0.163px;">UK</span>
<svg style="left:1416px;top:885px" width="20" height="18" viewBox="0 0 20 18"><rect x="1.9" y="1.9" width="9.6" height="10" rx="1" fill="none" stroke="#222" stroke-width="1.2"/><rect x="11.6" y="1.5" width="3.5" height="4.6" rx="0.9" fill="#dcebf2" stroke="#222" stroke-width="1.1"/><path d="M13.4 6.1 L13.4 17 M4.4 15.2 L9.4 15.2 M6.9 12 L6.9 17.6" fill="none" stroke="#222" stroke-width="1.1"/></svg>
<svg style="left:1437px;top:885px" width="20" height="16" viewBox="0 0 20 16"><path d="M2.6 6 L5 6 L8 3.2 L8 12.6 L5 9.8 L2.6 9.8 Z" fill="none" stroke="#222" stroke-width="1.1" stroke-linejoin="round"/><path d="M10.2 5.4 Q11.8 7.9 10.2 10.4" fill="none" stroke="#222" stroke-width="1.1"/><path d="M12.2 3.8 Q14.8 7.9 12.2 12" fill="none" stroke="#222" stroke-width="1.1"/><path d="M14.2 2.6 Q17.6 7.9 14.2 13.2" fill="none" stroke="#b5c1c7" stroke-width="1"/></svg>
<span style="left:1499.29px;top:881.07px;font-size:10.2px;line-height:10.2px;font-weight:400;color:#1f1f1f;letter-spacing:0.416px;">11:10</span>
<span style="left:1469.47px;top:895.80px;font-size:10.4px;line-height:10.4px;font-weight:400;color:#1f1f1f;letter-spacing:0.404px;">14/10/2025</span>
<svg style="left:1532px;top:883px" width="18" height="18" viewBox="0 0 18 18"><path d="M3.5 14 L3.5 7.8 A4.2 4.2 0 0 1 11.9 7.8 L11.9 14 L13 15 L13 15.4 L2.4 15.4 L2.4 15 Z" fill="none" stroke="#222" stroke-width="1.15" stroke-linejoin="round"/><path d="M6.2 16.2 L7.7 17.6 L9.2 16.2" fill="#222" stroke="#222" stroke-width="0.8"/></svg>
</div></body></html>
